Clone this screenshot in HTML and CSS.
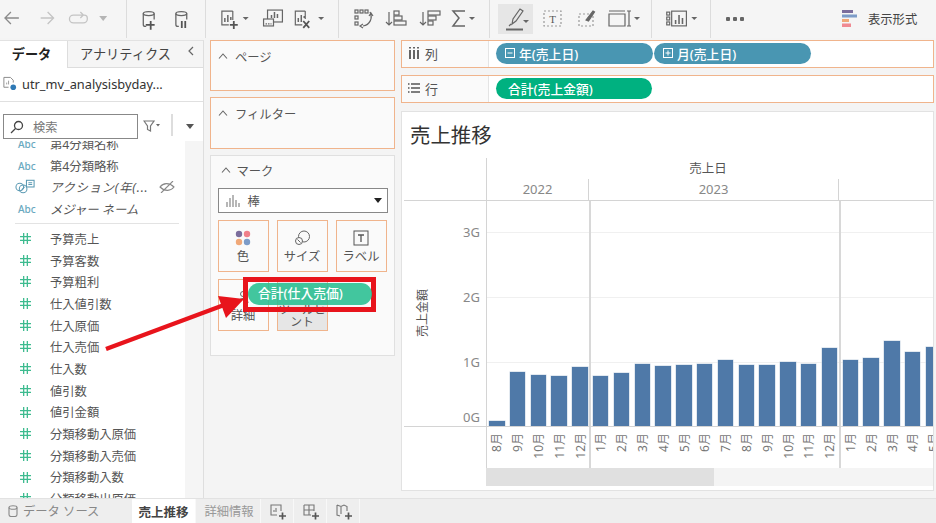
FILE: index.html
```html
<!DOCTYPE html>
<html lang="ja">
<head>
<meta charset="utf-8">
<title>売上推移</title>
<link rel="stylesheet" href="styles.css">
</head>
<body>
<div class="app">
  <header class="toolbar">
    <svg class="tg tg1" viewBox="0 0 127 38" fill="none" stroke="#8a8a8a" stroke-width="1.3">
      <path d="M19 18H6M11 12l-6 6 6 6"/>
      <path d="M41 18h12M48 12l6 6-6 6" stroke="#c4c4c4"/>
      <path d="M79 15H74a4 4 0 0 0 0 8h10a4 4 0 0 0 4-4v-1a3 3 0 0 0-3-3h-6M81 12l3 3-3 3" stroke="#c4c4c4"/>
      <path d="M100 16h8l-4 5z" fill="#b5b5b5" stroke="none"/>
    </svg>
    <svg class="tg tg2" viewBox="0 0 79 38" fill="none" stroke="#666" stroke-width="1.3">
      <ellipse cx="22" cy="13.5" rx="5.5" ry="2"/><path d="M16.500 13.500v11a2 2 0 0 0 2 2h1M27.500 13.500v6"/>
      <path d="M19 25h9M24 21v9" stroke="#555" stroke-width="1.800"/>
      <ellipse cx="55" cy="13.500" rx="5.500" ry="2"/><path d="M49.500 13.500v11a2 2 0 0 0 2 2h1M60.500 13.500v6"/>
      <path d="M55.500 21v7M59 21v7" stroke="#555" stroke-width="1.800"/>
    </svg>
    <svg class="tg tg3" viewBox="0 0 133 38" fill="none" stroke="#666" stroke-width="1.200">
      <path d="M27 11H16v14h7M27 11v9"/><path d="M19 22v-4M22 22v-7M25 20v-3" stroke-width="1.500"/>
      <path d="M24 25h8M28 21v8" stroke="#555" stroke-width="1.800"/>
      <path d="M37 17h6l-3 3z" fill="#666" stroke="none"/>
      <rect x="62" y="10" width="15" height="12" fill="#f5f5f5"/><path d="M66 18v-3M69 18v-6M72 18v-4" stroke-width="1.500"/>
      <rect x="58" y="19" width="10" height="7" fill="#f5f5f5"/><path d="M60 24h6" stroke-dasharray="1.500 1"/>
      <path d="M100 11H90v14h7M100 11v8"/><path d="M93 22v-4M96 22v-7M99 18v-2" stroke-width="1.500"/>
      <path d="M98 21l6 7M104 21l-6 7" stroke="#555" stroke-width="1.800"/>
      <path d="M113 17h6l-3 3z" fill="#666" stroke="none"/>
    </svg>
    <svg class="tg tg4" viewBox="0 0 150 38" fill="none" stroke="#666" stroke-width="1.200">
      <rect x="16" y="10" width="3" height="3"/><rect x="21" y="10" width="3" height="3"/><rect x="26" y="10" width="3" height="3"/>
      <rect x="16" y="16" width="3" height="3"/><rect x="16" y="22" width="3" height="3"/>
      <path d="M31 12c3 6 0 13-7 14M24 24l-3 2 3 2M30 16l2-3 2 3"/>
      <path d="M50 12v13M47 22l3 3 3-3"/><rect x="55" y="11" width="5" height="4"/><rect x="55" y="16" width="8" height="4"/><rect x="55" y="21" width="12" height="4"/>
      <path d="M84 12v13M81 22l3 3 3-3"/><rect x="89" y="11" width="12" height="4"/><rect x="89" y="16" width="8" height="4"/><rect x="89" y="21" width="5" height="4"/>
      <path d="M126 11h-12l6 7-6 8h12" stroke-width="1.500"/>
      <path d="M130 17h6l-3 3z" fill="#666" stroke="none"/>
    </svg>
    <div class="tg5">
      <svg class="markbtn" viewBox="0 0 35 30" fill="none" stroke="#666" stroke-width="1.200">
        <path d="M14 20l1-5 7-10 3 2-7 10zM13 20l-2 2"/><path d="M8 25.500h17" stroke-width="2"/>
        <path d="M25 16h6l-3 3z" fill="#666" stroke="none"/>
      </svg>
      <svg class="tg5art" viewBox="0 0 119 38" fill="none" stroke="#999" stroke-width="1.200">
        <rect x="11" y="11" width="17" height="15" stroke-dasharray="2 2"/>
        <text x="19.500" y="22.500" class="tg-t">T</text>
        <rect x="46" y="14" width="14" height="12" stroke-dasharray="2 2"/>
        <path d="M53 20l7-9 1.500 1-6 9z" stroke="#666" fill="#666"/>
        <path d="M76 14h16v12H76zM76 11h16M96 11v15M94 11h4M94 26h4" stroke="#666"/>
        <path d="M101 17h6l-3 3z" fill="#666" stroke="none"/>
      </svg>
    </div>
    <svg class="tg tg6" viewBox="0 0 59 38" fill="none" stroke="#666" stroke-width="1.200">
      <rect x="15" y="12" width="3" height="3"/><rect x="15" y="17" width="3" height="3"/><rect x="15" y="22" width="3" height="3"/>
      <rect x="20" y="11" width="15" height="15"/><path d="M24 24v-4M27.500 24v-9M31 24v-6" stroke-width="1.600"/>
      <path d="M40 17h6l-3 3z" fill="#666" stroke="none"/>
    </svg>
    <div class="dots"><i></i><i></i><i></i></div>
    <div class="format">
      <svg class="format-ic" viewBox="0 0 16 18">
        <rect x="0" y="0" width="11" height="3" fill="#7b6d9c"/><rect x="0" y="4.500" width="15" height="3" fill="#7d9cc8"/>
        <rect x="0" y="9" width="7" height="3" fill="#f0a878"/><rect x="0" y="13.500" width="9" height="3.500" fill="#f08a92"/>
      </svg>
      <span>表示形式</span>
    </div>
  </header>

  <main class="main">
    <aside class="data">
      <div class="tabs">
        <div class="tab active">データ</div>
        <div class="tab other">アナリティクス<svg class="collapse" viewBox="0 0 8 12" fill="none" stroke="#666" stroke-width="1.200"><path d="M6 2L2 6l4 4"/></svg></div>
      </div>
      <div class="source">
        <svg class="src-ic" viewBox="0 0 16 16" fill="none" stroke="#888"><path d="M2 1.500h7l3 3V7M2 1.500V12h5"/><path d="M5 9V7M7 9V5" stroke="#999"/><circle cx="12" cy="12" r="3" fill="#2f79b5" stroke="none"/></svg>
        <span>utr_mv_analysisbyday...</span>
      </div>
      <div class="searchbar">
        <div class="search">
          <svg class="mag" viewBox="0 0 14 14" fill="none" stroke="#444" stroke-width="1.300"><circle cx="8.500" cy="5.500" r="4"/><path d="M5.500 8.500L1 13"/></svg>
          <span>検索</span>
        </div>
        <svg class="filt" viewBox="0 0 18 14" fill="none" stroke="#777" stroke-width="1.200"><path d="M1 2h10L7.500 7v5l-3-1.500V7z"/><path d="M13 5h4l-2 2.500z" fill="#666" stroke="none"/></svg>
        <div class="vsep"></div>
        <div class="tri"></div>
      </div>
      <div class="list-wrap">
        <div class="list">
          <div class="row"><span class="abc">Abc</span><span>第4分類名称</span></div>
          <div class="row"><span class="abc">Abc</span><span>第4分類略称</span></div>
          <div class="row em">
            <svg class="ic-act" viewBox="0 0 22 15" fill="none" stroke="#5b9ab3" stroke-width="1.100"><circle cx="5" cy="8" r="4"/><circle cx="8.500" cy="10" r="4"/><path d="M7 11l3-3"/><rect x="12" y="1" width="8" height="7"/><path d="M14 3.500h4M14 5.500h4"/></svg>
            <span class="act">アクション(年(...</span>
            <svg class="eye" viewBox="0 0 16 12" fill="none" stroke="#888" stroke-width="1.100"><path d="M1 6c3-4 9-5 14 0-3 4-9 5-14 0z"/><path d="M2 12L14 0"/></svg>
          </div>
          <div class="row em"><span class="abc">Abc</span><span>メジャー ネーム</span></div>
          <div class="divider"></div>
          <div class="row"><svg class="hash" viewBox="0 0 12 12"><use href="#h"/></svg><span>予算売上</span></div>
          <div class="row"><svg class="hash" viewBox="0 0 12 12"><use href="#h"/></svg><span>予算客数</span></div>
          <div class="row"><svg class="hash" viewBox="0 0 12 12"><use href="#h"/></svg><span>予算粗利</span></div>
          <div class="row"><svg class="hash" viewBox="0 0 12 12"><use href="#h"/></svg><span>仕入値引数</span></div>
          <div class="row"><svg class="hash" viewBox="0 0 12 12"><use href="#h"/></svg><span>仕入原価</span></div>
          <div class="row"><svg class="hash" viewBox="0 0 12 12"><use href="#h"/></svg><span>仕入売価</span></div>
          <div class="row"><svg class="hash" viewBox="0 0 12 12"><use href="#h"/></svg><span>仕入数</span></div>
          <div class="row"><svg class="hash" viewBox="0 0 12 12"><use href="#h"/></svg><span>値引数</span></div>
          <div class="row"><svg class="hash" viewBox="0 0 12 12"><use href="#h"/></svg><span>値引金額</span></div>
          <div class="row"><svg class="hash" viewBox="0 0 12 12"><use href="#h"/></svg><span>分類移動入原価</span></div>
          <div class="row"><svg class="hash" viewBox="0 0 12 12"><use href="#h"/></svg><span>分類移動入売価</span></div>
          <div class="row"><svg class="hash" viewBox="0 0 12 12"><use href="#h"/></svg><span>分類移動入数</span></div>
          <div class="row"><svg class="hash" viewBox="0 0 12 12"><use href="#h"/></svg><span>分類移動出原価</span></div>
        </div>
      </div>
    </aside>

    <section class="cards">
      <div class="card orange page-card">
        <div class="card-h"><svg class="chev" viewBox="0 0 10 6" fill="none" stroke="#666" stroke-width="1.100"><path d="M1 5.500L5 1l4 4.500"/></svg>ページ</div>
      </div>
      <div class="card orange filter-card">
        <div class="card-h"><svg class="chev" viewBox="0 0 10 6" fill="none" stroke="#666" stroke-width="1.100"><path d="M1 5.500L5 1l4 4.500"/></svg>フィルター</div>
      </div>
      <div class="card marks">
        <div class="card-h"><svg class="chev" viewBox="0 0 10 6" fill="none" stroke="#666" stroke-width="1.100"><path d="M1 5.500L5 1l4 4.500"/></svg>マーク</div>
        <div class="select">
          <svg class="sel-ic" viewBox="0 0 14 12" fill="none" stroke="#888" stroke-width="1.200"><path d="M1 12V7M4 12V3M7 12V0M10 12V5M13 12V8"/></svg>
          <span>棒</span>
          <i class="sel-tri"></i>
        </div>
        <div class="mgrid">
          <div class="mbtn">
            <svg class="mic" viewBox="0 0 16 16"><circle cx="4" cy="4" r="3.200" fill="#7b6d9c"/><circle cx="12" cy="4" r="3.200" fill="#f0808a"/><circle cx="4" cy="12" r="3.200" fill="#f0a878"/><circle cx="12" cy="12" r="3.200" fill="#7d9cc8"/></svg>
            <span>色</span>
          </div>
          <div class="mbtn">
            <svg class="mic" viewBox="0 0 16 16" fill="none" stroke="#666" stroke-width="1"><circle cx="10" cy="6.500" r="5.500"/><circle cx="5" cy="11" r="3.500" fill="#fafafa"/><path d="M3.500 9.500l3 3"/></svg>
            <span>サイズ</span>
          </div>
          <div class="mbtn">
            <svg class="mic" viewBox="0 0 16 16" fill="none" stroke="#555" stroke-width="1"><rect x="1" y="1" width="14" height="14"/><path d="M5 5h6M8 5v7" stroke-width="1.300"/></svg>
            <span>ラベル</span>
          </div>
          <div class="mbtn">
            <svg class="mic" viewBox="0 0 16 16" fill="none" stroke="#666" stroke-width="1"><circle cx="8" cy="5" r="2.500"/><path d="M3 14c0-6 10-6 10 0"/></svg>
            <span>詳細</span>
          </div>
          <div class="mbtn tip">
            <svg class="mic" viewBox="0 0 16 16"></svg>
            <span>ツールヒント</span>
          </div>
        </div>
      </div>
    </section>

    <section class="viz">
      <div class="shelf">
        <div class="shelf-h"><svg class="sh-ic" viewBox="0 0 12 12" fill="none" stroke="#555" stroke-width="1.800"><path d="M2 3v9M6 3v9M10 3v9"/><path d="M2 0v1.500M6 0v1.500M10 0v1.500"/></svg>列</div>
        <div class="pills">
          <div class="pill blue"><svg class="pm" viewBox="0 0 10 10" fill="none" stroke="#fff"><rect x=".5" y=".5" width="9" height="9"/><path d="M2.500 5h5"/></svg>年(売上日)</div>
          <div class="pill blue"><svg class="pm" viewBox="0 0 10 10" fill="none" stroke="#fff"><rect x=".5" y=".5" width="9" height="9"/><path d="M2.500 5h5M5 2.500v5"/></svg>月(売上日)</div>
        </div>
      </div>
      <div class="shelf">
        <div class="shelf-h"><svg class="sh-ic" viewBox="0 0 12 12" fill="none" stroke="#555" stroke-width="1.500"><path d="M3 2h9M3 6h9M3 10h9M0 2h1.500M0 6h1.500M0 10h1.500"/></svg>行</div>
        <div class="pills"><div class="pill green">合計(売上金額)</div></div>
      </div>
      <div class="sheet">
        <h1 class="title">売上推移</h1>
        <div class="cross">
          <div class="corner"></div>
          <div class="head">
            <div class="head-t">売上日</div>
            <div class="years">
              <div class="yr y22">2022</div>
              <div class="yr y23">2023</div>
              <div class="yr y24"></div>
            </div>
          </div>
          <div class="axis">
            <div class="axis-title"><span>売上金額</span></div>
            <div class="ticks">
              <div class="tick">3G</div>
              <div class="tick">2G</div>
              <div class="tick short">1G</div>
              <div class="tick">0G</div>
            </div>
          </div>
          <div class="plot">
            <i class="gl g3"></i><i class="gl g2"></i><i class="gl g1"></i>
            <i class="yl l1"></i><i class="yl l2"></i>
            <div class="bars">
              <i class="bar" style="height:5px"></i><i class="bar" style="height:54px"></i><i class="bar" style="height:51px"></i><i class="bar" style="height:50px"></i><i class="bar" style="height:59px"></i>
              <i class="bar" style="height:50px"></i><i class="bar" style="height:53px"></i><i class="bar" style="height:62px"></i><i class="bar" style="height:60px"></i><i class="bar" style="height:61px"></i><i class="bar" style="height:62px"></i><i class="bar" style="height:66px"></i><i class="bar" style="height:61px"></i><i class="bar" style="height:61px"></i><i class="bar" style="height:64px"></i><i class="bar" style="height:62px"></i><i class="bar" style="height:78px"></i>
              <i class="bar" style="height:66px"></i><i class="bar" style="height:68px"></i><i class="bar" style="height:85px"></i><i class="bar" style="height:74px"></i><i class="bar" style="height:79px"></i>
            </div>
          </div>
          <div class="lab-corner"></div>
          <div class="labels">
            <i class="yl l1"></i><i class="yl l2"></i>
            <div class="lab"><span>8月</span></div><div class="lab"><span>9月</span></div><div class="lab"><span>10月</span></div><div class="lab"><span>11月</span></div><div class="lab"><span>12月</span></div>
            <div class="lab"><span>1月</span></div><div class="lab"><span>2月</span></div><div class="lab"><span>3月</span></div><div class="lab"><span>4月</span></div><div class="lab"><span>5月</span></div><div class="lab"><span>6月</span></div><div class="lab"><span>7月</span></div><div class="lab"><span>8月</span></div><div class="lab"><span>9月</span></div><div class="lab"><span>10月</span></div><div class="lab"><span>11月</span></div><div class="lab"><span>12月</span></div>
            <div class="lab"><span>1月</span></div><div class="lab"><span>2月</span></div><div class="lab"><span>3月</span></div><div class="lab"><span>4月</span></div><div class="lab"><span>5月</span></div>
          </div>
          <div class="lab-corner"></div>
          <div class="scroll"><div class="thumb"></div></div>
        </div>
      </div>
    </section>
  </main>

  <footer class="bottom">
    <div class="btab src"><svg class="db" viewBox="0 0 10 12" fill="none" stroke="#888" stroke-width="1.100"><ellipse cx="5" cy="2.500" rx="4" ry="1.800"/><path d="M1 2.500v7a2 2 0 0 0 2 2h4a2 2 0 0 0 2-2v-7"/></svg><span>データ ソース</span></div>
    <div class="btab sel">売上推移</div>
    <div class="btab sh">詳細情報</div>
    <div class="btab add"><svg class="plus" viewBox="0 0 18 18" fill="none" stroke="#777" stroke-width="1.100"><path d="M9 3H2v10h6M9 3h3v6"/><path d="M5 10V8M7 10V6" /><path d="M10 14h7M13.500 10.500v7" stroke="#555" stroke-width="1.700"/></svg></div>
    <div class="btab add"><svg class="plus" viewBox="0 0 18 18" fill="none" stroke="#777" stroke-width="1.100"><path d="M2 3h10v6M2 3v10h7M2 8h10M7 3v10"/><path d="M10 14h7M13.500 10.500v7" stroke="#555" stroke-width="1.700"/></svg></div>
    <div class="btab add"><svg class="plus" viewBox="0 0 18 18" fill="none" stroke="#777" stroke-width="1.100"><path d="M2 3l4 1.500L9 3l3 1.500V9M2 3v10l3 1M6 4.500V12"/><path d="M10 14h7M13.500 10.500v7" stroke="#555" stroke-width="1.700"/></svg></div>
  </footer>

  <svg class="defs" width="0" height="0"><defs><g id="h" stroke="#3dbb8f" stroke-width="1.400" fill="none"><path d="M4 0v12M8 0v12M0 4h12M0 8h12"/></g></defs></svg>

  <svg class="arrow" viewBox="0 0 936 523"><path d="M106 349L224 305" stroke="#e8141c" stroke-width="4.500" fill="none"/><path d="M218 296L244 299L226 318Z" fill="#e8141c"/></svg>
  <div class="drag"><div class="drag-pill">合計(仕入売価)</div></div>
</div>
</body>
</html>
```

FILE: styles.css
```css
* { box-sizing: border-box; }
html, body { margin: 0; padding: 0; }
body {
  width: 936px; height: 523px; overflow: hidden;
  font-family: "Noto Sans", "Noto Sans CJK JP", sans-serif;
  font-size: 12.3px; color: #555; background: #f4f4f4;
}
.app { position: relative; width: 936px; height: 523px; display: flex; flex-direction: column; }

/* toolbar */
.toolbar { height: 38px; flex: none; display: flex; align-items: stretch; background: #f5f5f5; }
.tg { height: 38px; flex: none; display: block; border-right: 1.500px solid #dcdcdc; }
.tg1 { width: 127px; }
.tg2 { width: 79px; }
.tg3 { width: 133px; }
.tg4 { width: 151px; }
.tg5 { width: 162px; flex: none; display: flex; align-items: center; padding-left: 8px; border-right: 1.500px solid #dcdcdc; }
.markbtn { width: 35px; height: 30px; background: #e6e6e6; flex: none; }
.tg5art { width: 119px; height: 38px; flex: none; }
.tg-t { font-family: "Liberation Serif", serif; font-size: 11px; fill: #555; stroke: none; text-anchor: middle; }
.tg6 { width: 59px; }
.dots { width: 48px; display: flex; align-items: center; justify-content: center; gap: 2.500px; flex: none; }
.dots i { width: 4.500px; height: 4.500px; border-radius: 1px; background: #666; }
.format { flex: 1; display: flex; align-items: center; gap: 10px; padding-left: 83px; font-size: 12.3px; color: #444; }
.format-ic { width: 16px; height: 18px; }

/* main */
.main { flex: 1; min-height: 0; display: flex; gap: 6px; padding-top: 2px; }
.data { width: 204px; flex: none; display: flex; flex-direction: column; background: #fff; border-right: 1.500px solid #dedede; border-top: 1px solid #e2e2e2; }
.tabs { height: 27px; display: flex; flex: none; }
.tab { display: flex; align-items: center; padding-bottom: 2px; }
.tab.active { width: 67px; justify-content: center; font-weight: 700; color: #222; padding-right: 4px; background: #fff; font-size: 13.200px; }
.tab.other { flex: 1; padding-left: 12px; background: #f5f5f5; border-left: 1px solid #ddd; border-bottom: 1px solid #ddd; color: #444; gap: 16px; font-size: 13.200px; }
.collapse { width: 8px; height: 12px; margin-top: -4px; }
.source { height: 34px; flex: none; display: flex; align-items: center; gap: 5px; padding: 0 0 2px 2px; border-bottom: 1.500px solid #e0e0e0; color: #333; font-size: 12.800px; }
.src-ic { width: 15px; height: 15px; }
.searchbar { height: 39px; flex: none; display: flex; align-items: flex-start; padding: 12px 0 0 3px; }
.search { width: 135px; height: 25px; border: 1.500px solid #888; display: flex; align-items: center; gap: 9px; padding-left: 6px; color: #777; background: #fff; }
.mag { width: 14px; height: 14px; }
.filt { width: 18px; height: 14px; margin: 5px 0 0 5px; }
.vsep { width: 1.500px; height: 22px; background: #ddd; margin-left: 10px; }
.tri { width: 0; height: 0; border: 4px solid transparent; border-top: 5px solid #555; border-bottom: 0; margin: 10px 0 0 13px; }
.list-wrap { flex: 1; min-height: 0; overflow: hidden; margin-right: 18px; background: #fff; box-shadow: 18px 0 0 #f5f5f5; }
.list { margin-top: -8px; }
.row { height: 21.700px; display: flex; align-items: center; position: relative; padding-left: 50px; white-space: nowrap; }
.row.em { font-style: italic; }
.act { letter-spacing: .8px; }
.abc { position: absolute; left: 18px; top: 4px; font-size: 10px; font-weight: 500; color: #6aa9c0; font-style: normal; }
.hash { position: absolute; left: 20px; top: 5px; width: 11px; height: 11px; }
.ic-act { position: absolute; left: 15px; top: 3px; width: 21px; height: 15px; }
.eye { position: absolute; left: 159px; top: 5px; width: 16px; height: 12px; }
.divider { margin: 3px 6px 0 15px; height: 5.300px; border-top: 1.500px solid #e3e3e3; }

/* middle */
.cards { width: 185px; flex: none; display: flex; flex-direction: column; gap: 6px; }
.card { border: 1.500px solid #e0e0e0; background: #fafafa; }
.card.orange { border-color: #f0b48c; }
.page-card { height: 51px; }
.filter-card { height: 52px; }
.marks { height: 201px; padding: 0 6.500px; }
.card-h { height: 28px; display: flex; align-items: center; gap: 7px; padding: 2px 0 0 7px; color: #555; }
.page-card .card-h, .filter-card .card-h { height: 30px; }
.marks .card-h { padding-left: 3px; gap: 6px; }
.chev { width: 10px; height: 6px; margin-top: -3px; }
.select { height: 25px; margin-top: 4px; border: 1.500px solid #888; display: flex; align-items: center; gap: 8px; padding-left: 7px; background: #fff; position: relative; }
.sel-ic { width: 14px; height: 12px; }
.sel-tri { position: absolute; right: 5px; top: 9px; width: 0; height: 0; border: 4px solid transparent; border-top: 5px solid #222; border-bottom: 0; }
.mgrid { display: grid; grid-template-columns: repeat(3, 51px); gap: 7px 8px; margin-top: 7px; }
.mbtn { height: 52px; border: 1.500px solid #f0b48c; display: flex; flex-direction: column; align-items: center; padding-top: 9px; gap: 3px; text-align: center; line-height: 15px; overflow: hidden; font-size: 12.300px; background: #fafafa; }
.mic { width: 16px; height: 16px; flex: none; }
.mbtn.tip { background: #e6e6e6; font-size: 11.800px; line-height: 12px; padding-top: 12px; }
.mbtn.tip .mic { height: 8px; }

/* viz */
.viz { flex: 1; min-width: 0; display: flex; flex-direction: column; gap: 7px; padding-right: 2px; }
.shelf { height: 28px; flex: none; border: 1.500px solid #f0b48c; display: flex; background: #fff; }
.shelf-h { width: 87px; flex: none; border-right: 1px solid #e4e4e4; background: #fafafa; display: flex; align-items: center; gap: 5px; padding: 0 0 2px 6px; color: #555; font-size: 13px; }
.sh-ic { width: 12px; height: 12px; }
.pills { display: flex; gap: 1px; padding: 1.500px 0 0 7px; }
.pill { width: 157px; height: 21px; border-radius: 11px; color: #fff; display: flex; align-items: center; gap: 4px; padding-left: 9px; font-size: 12.800px; font-weight: 500; }
.pill.blue { background: #4996b2; }
.pill.green { background: #00b180; padding-left: 12px; width: 156px; }
.pm { width: 10px; height: 10px; }
.sheet { height: 380px; flex: none; margin-top: 1px; background: #fff; border: 1.500px solid #e2e2e2; display: flex; flex-direction: column; }
.title { margin: 0; height: 46px; font-size: 20.400px; font-weight: 400; line-height: 47px; padding-left: 8px; color: #333; }
.cross { display: grid; grid-template-columns: 84px 1fr; grid-template-rows: 43px 226px 41px 18px; }
.corner { border-bottom: 1.500px solid #d4d4d4; margin-left: 2px; }
.head { border-left: 1.500px solid #d4d4d4; border-bottom: 1.500px solid #d4d4d4; display: flex; flex-direction: column; }
.head-t { height: 21px; text-align: center; line-height: 21px; font-size: 12.500px; color: #555; padding-right: 4px; }
.years { flex: 1; display: flex; }
.yr { text-align: center; font-size: 13px; line-height: 20px; color: #888; border-right: 1.500px solid #d4d4d4; }
.y22 { width: 102px; }
.y23 { width: 250px; }
.y24 { flex: 1; border-right: 0; }
.axis { display: flex; position: relative; border-bottom: 1.500px solid #d4d4d4; margin-left: 2px; }
.axis-title { width: 36px; display: flex; align-items: center; justify-content: center; }
.axis-title span { writing-mode: vertical-rl; text-orientation: sideways; transform: rotate(180deg); font-size: 12px; color: #555; }
.ticks { flex: 1; padding: 23px 6px 0 0; text-align: right; font-size: 13px; line-height: 16px; color: #888; }
.tick { height: 65px; }
.tick.short { height: 55px; }
.plot { position: relative; overflow: hidden; border-left: 1.500px solid #d4d4d4; border-bottom: 1.500px solid #d4d4d4; }
.gl { position: absolute; left: 0; right: 0; height: 1px; background: #f0f0f0; }
.g3 { top: 31px; }
.g2 { top: 96px; }
.g1 { top: 161px; }
.yl { position: absolute; top: 0; bottom: 0; width: 1.500px; background: #d8d8d8; z-index: 1; }
.l1 { left: 102px; }
.l2 { left: 352px; }
.bars { position: absolute; left: 2px; bottom: 0; height: 100%; display: flex; align-items: flex-end; gap: 5.300px; }
.bar { display: block; width: 15.500px; flex: none; background: #4f79a8; box-shadow: 0 0 0 .5px #c5d3e2; }
.lab-corner { min-height: 0; }
.labels { position: relative; overflow: hidden; display: flex; border-left: 1.500px solid #d4d4d4; }
.lab { width: 20.800px; flex: none; padding-top: 6px; display: flex; justify-content: center; align-items: flex-start; }
.lab span { writing-mode: vertical-rl; text-orientation: sideways; transform: rotate(180deg); font-size: 12px; line-height: 14px; color: #777; white-space: nowrap; }
.scroll { background: #f4f4f4; }
.thumb { width: 228px; height: 100%; background: #e0e0e0; }

/* bottom */
.bottom { height: 25px; flex: none; display: flex; background: #eeeeee; border-top: 1px solid #e2e2e2; }
.btab { display: flex; align-items: center; justify-content: center; flex: none; }
.btab.src { width: 132px; gap: 5px; color: #888; justify-content: flex-start; padding-left: 8px; white-space: nowrap; }
.db { width: 10px; height: 12px; flex: none; }
.btab.sel { width: 63px; background: #fff; font-weight: 700; color: #444; font-size: 12.500px; }
.btab.sh { width: 66px; color: #999; border-left: 1px solid #f8f8f8; border-right: 1.500px solid #f8f8f8; padding-left: 2px; }
.btab.add { width: 33px; border-right: 1.500px solid #f8f8f8; padding-left: 2px; }
.plus { width: 18px; height: 18px; }

/* overlays */
.defs { position: absolute; }
.arrow { position: absolute; left: 0; top: 0; width: 936px; height: 523px; pointer-events: none; }
.drag { position: absolute; left: 243px; top: 277px; width: 133px; height: 35px; border: 5px solid #e8141c; padding-top: 1px; }
.drag-pill { height: 22px; width: 124px; border-radius: 11px; background: rgba(40, 190, 145, .88); color: #fff; font-size: 12.800px; font-weight: 500; line-height: 21px; padding-left: 10px; }
```
